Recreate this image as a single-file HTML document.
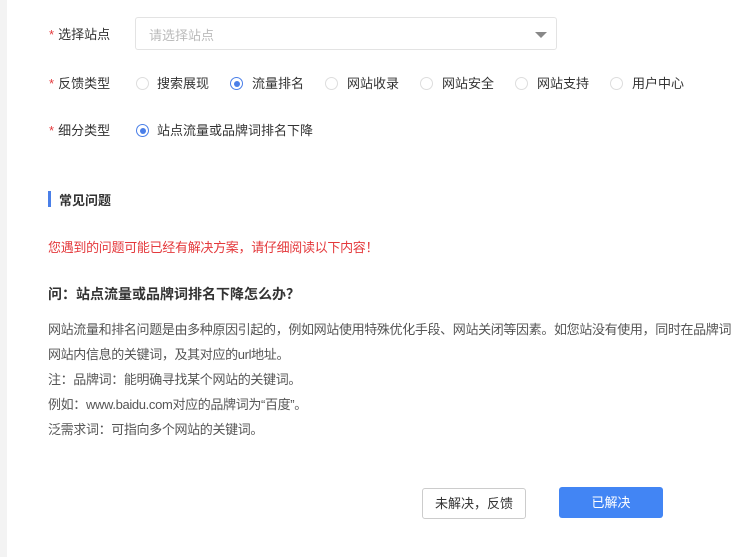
<!DOCTYPE html>
<html><head><meta charset="utf-8"><style>
body{margin:0;width:732px;height:557px;overflow:hidden;background:#fff;font-family:"Liberation Sans","Noto Sans CJK SC",sans-serif;font-size:13px;color:#333;position:relative}
.strip{position:absolute;left:0;top:0;width:7px;height:557px;background:#f3f3f3}
.a{position:absolute;white-space:nowrap}
.lab{left:49px}
.lab b{color:#e4393c;font-weight:normal;margin-right:4px}
.sel{position:absolute;left:135px;top:17px;width:422px;height:33px;border:1px solid #e3e3e3;border-radius:3px;box-sizing:border-box}
.sel span{position:absolute;left:13px;top:7px;color:#bbb}
.sel i{position:absolute;right:9px;top:14px;border-left:6px solid transparent;border-right:6px solid transparent;border-top:6px solid #888}
.r{position:absolute;width:13px;height:13px;border:1px solid #ddd;border-radius:50%;box-sizing:border-box}
.r.on{border-color:#4a7fe8}
.r.on:after{content:"";position:absolute;left:2.5px;top:2.5px;width:6px;height:6px;border-radius:50%;background:#4a7fe8}
.btn{position:absolute;height:31px;box-sizing:border-box;border-radius:3px;text-align:center;line-height:29px}
</style></head><body>
<div class="strip"></div>
<div class="a lab" style="top:24px"><b>*</b>选择站点</div>
<div class="sel"><span>请选择站点</span><i></i></div>
<div class="a lab" style="top:73px"><b>*</b>反馈类型</div>
<div class="r" style="left:136px;top:77px"></div><div class="a" style="left:157px;top:73px">搜索展现</div>
<div class="r on" style="left:230px;top:77px"></div><div class="a" style="left:252px;top:73px">流量排名</div>
<div class="r" style="left:325px;top:77px"></div><div class="a" style="left:347px;top:73px">网站收录</div>
<div class="r" style="left:420px;top:77px"></div><div class="a" style="left:442px;top:73px">网站安全</div>
<div class="r" style="left:515px;top:77px"></div><div class="a" style="left:537px;top:73px">网站支持</div>
<div class="r" style="left:610px;top:77px"></div><div class="a" style="left:632px;top:73px">用户中心</div>
<div class="a lab" style="top:120px"><b>*</b>细分类型</div>
<div class="r on" style="left:136px;top:124px"></div><div class="a" style="left:157px;top:120px">站点流量或品牌词排名下降</div>
<div class="a" style="left:48px;top:191px;width:3px;height:16px;background:#4a7fe8"></div>
<div class="a" style="left:59px;top:190px;font-weight:bold">常见问题</div>
<div class="a" style="left:48px;top:237px;color:#e4393c;letter-spacing:-0.3px">您遇到的问题可能已经有解决方案，请仔细阅读以下内容！</div>
<div class="a" style="left:48px;top:284px;font-weight:bold;font-size:14px">问：站点流量或品牌词排名下降怎么办？</div>
<div class="a" style="left:48px;top:317px;line-height:25px;color:#555;letter-spacing:-0.35px">网站流量和排名问题是由多种原因引起的，例如网站使用特殊优化手段、网站关闭等因素。如您站没有使用，同时在品牌词<br>网站内信息的关键词，及其对应的url地址。<br>注：品牌词：能明确寻找某个网站的关键词。<br>例如：www.baidu.com对应的品牌词为“百度”。<br>泛需求词：可指向多个网站的关键词。</div>
<div class="btn" style="left:422px;top:488px;width:104px;border:1px solid #ccc;color:#333">未解决，反馈</div>
<div class="btn" style="left:559px;top:487px;width:104px;background:#4285f4;color:#fff;line-height:31px">已解决</div>
</body></html>
